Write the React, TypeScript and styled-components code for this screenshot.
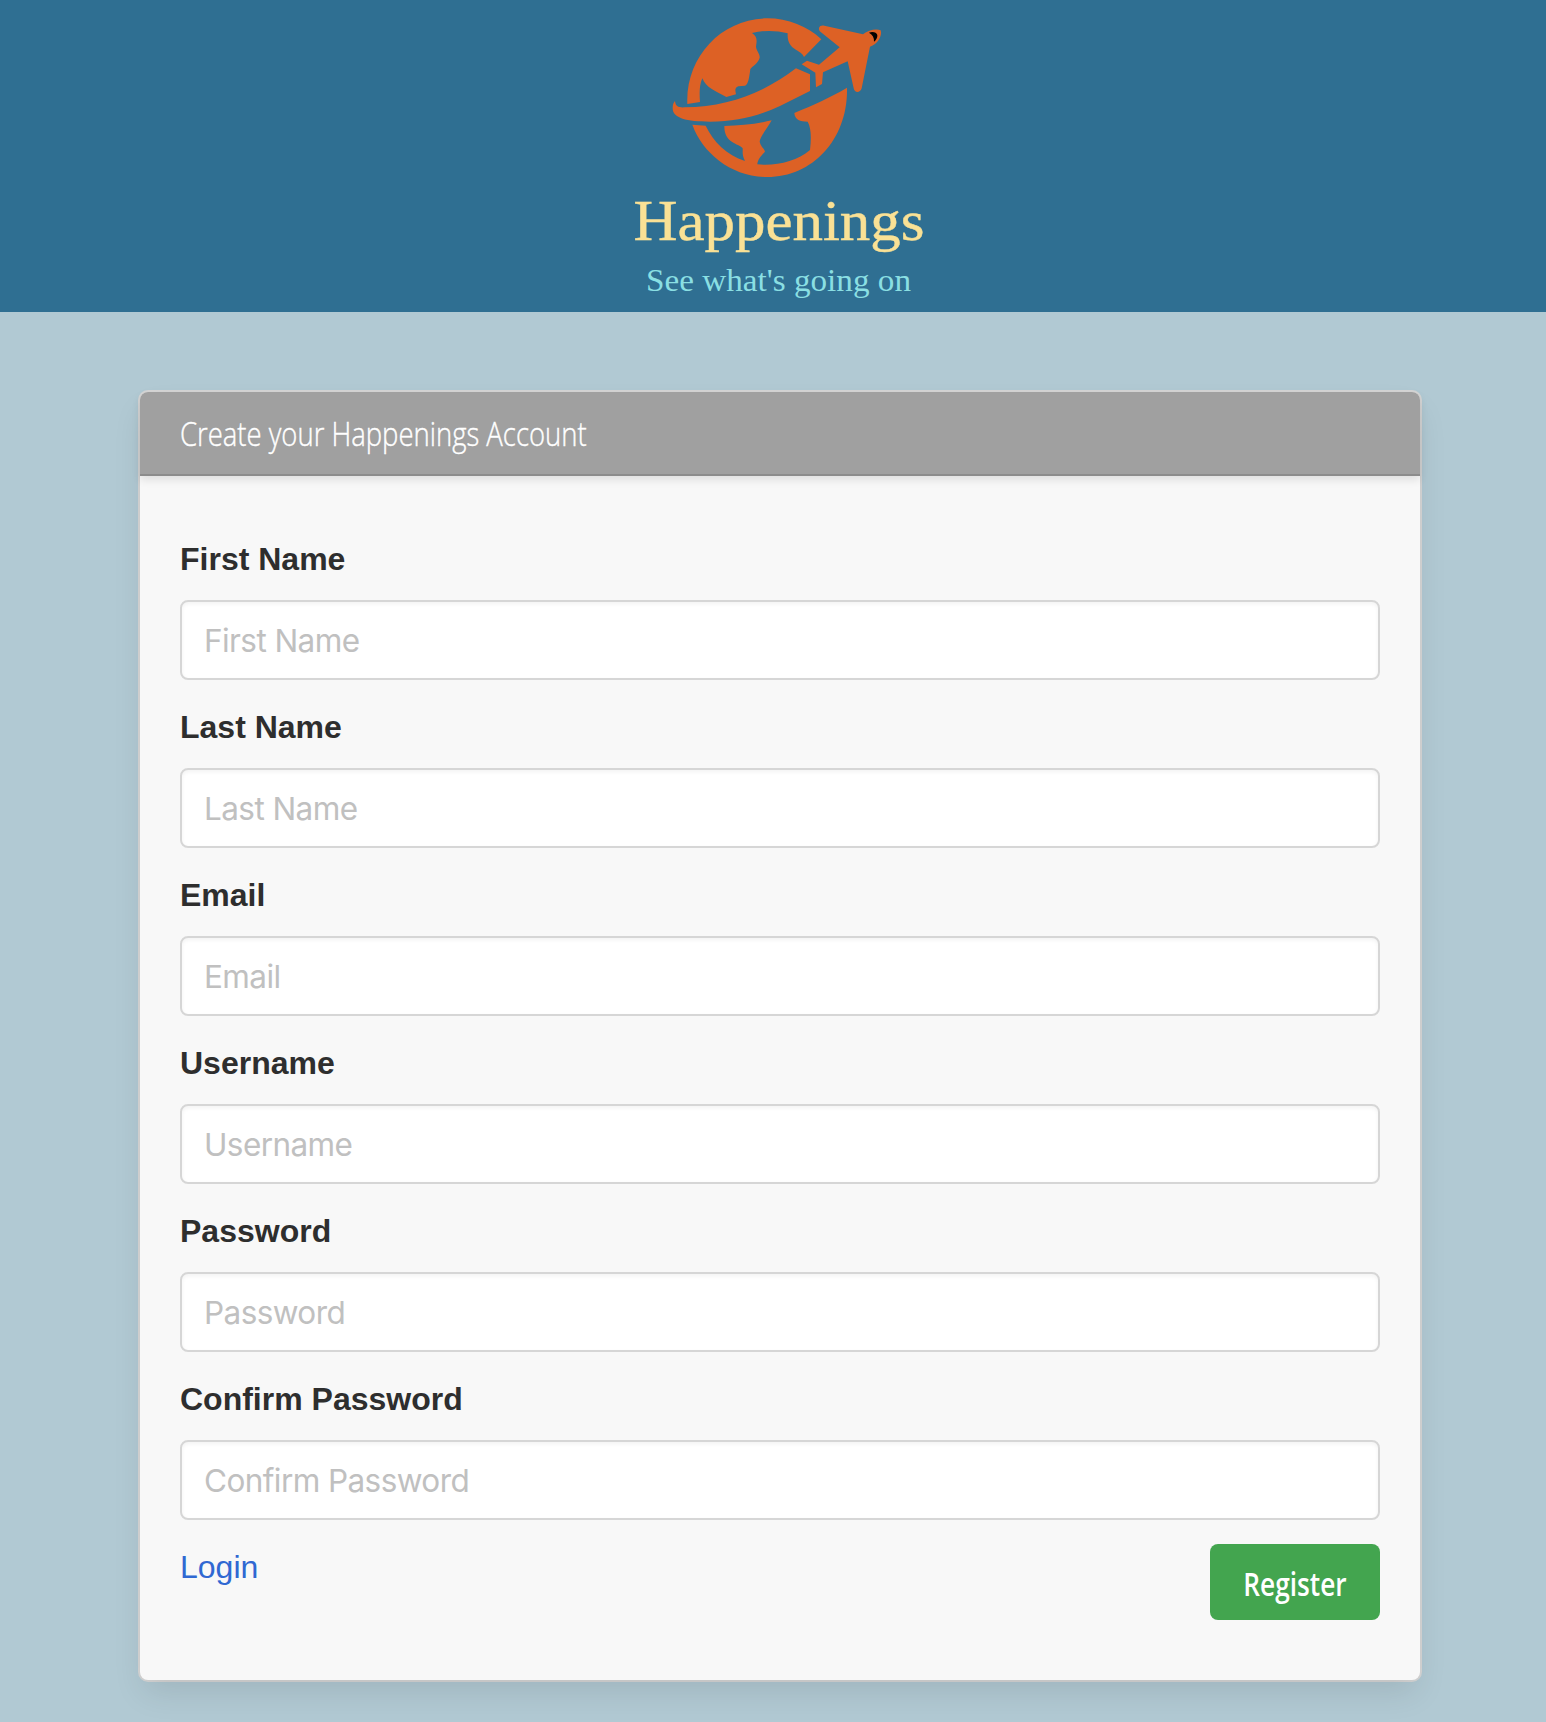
import React from "react";
import styled, { createGlobalStyle } from "styled-components";

const GlobalStyle = createGlobalStyle`
  *, *::before, *::after { box-sizing: border-box; }
  html { background: #b1c9d3; }
  body {
    margin: 0;
    color: #2e2e2e;
    font: 400 32px/1.5 "Liberation Sans", Helvetica, Arial, sans-serif;
  }
`;

const Page = styled.div`
  min-height: 1722px;
  overflow: hidden;
  background: #b1c9d3;
`;

const Banner = styled.header`
  display: flex;
  justify-content: center;
  height: 312px;
  background: #2f6f92;
`;

const LogoArt = styled.svg`
  display: block;
  width: 320px;
  height: 312px;
  font-family: "Liberation Serif", serif;
`;

const Card = styled.main`
  width: 1280px;
  height: 1288px;
  margin: 80px auto 0 140px;
  border-radius: 8px;
  background: #f8f8f8;
  box-shadow: 0 16px 32px -4px rgba(10, 10, 10, 0.1), 0 0 0 2px #d6d6d6;
`;

const CardHeader = styled.div`
  display: flex;
  align-items: center;
  height: 84px;
  padding: 0 40px;
  border-bottom: 2px solid #8c8c8c;
  border-radius: 8px 8px 0 0;
  background: #a0a0a0;
  box-shadow: 0 4px 8px rgba(10, 10, 10, 0.1);
`;

const Condensed = styled.span<{ $scale: number; $origin?: string }>`
  display: inline-block;
  font-family: "Open Sans", sans-serif;
  white-space: nowrap;
  transform: scaleX(${(p) => p.$scale});
  transform-origin: ${(p) => p.$origin ?? "left"} center;
`;

const CardTitle = styled.h1`
  margin: 2px 0 0;
  color: #fff;
  font-size: 33px;
  font-weight: 300;
  line-height: 48px;
  -webkit-text-stroke: 0.4px #fff;
`;

const Form = styled.form`
  padding: 60px 40px 0;
`;

const Field = styled.div`
  display: flex;
  flex-direction: column;
  gap: 16px;
  margin-bottom: 24px;
`;

const Label = styled.label`
  height: 48px;
  color: #2e2e2e;
  font-weight: 700;
  line-height: 46px;
`;

const Input = styled.input`
  width: 100%;
  height: 80px;
  padding: 0 22px;
  border: 2px solid #d6d6d6;
  border-radius: 8px;
  outline: none;
  background: #fff;
  box-shadow: inset 0 2px 4px rgba(10, 10, 10, 0.05);
  color: #2e2e2e;
  font: 400 31.5px/48px Inter, sans-serif;
  letter-spacing: -0.58px;

  &::placeholder {
    color: #c0c0c0;
    opacity: 1;
  }
`;

const Actions = styled.div`
  display: flex;
  align-items: flex-start;
  justify-content: space-between;
`;

const LoginLink = styled.a`
  color: #3068d2;
  line-height: 46px;
  text-decoration: none;
`;

const RegisterButton = styled.button`
  display: flex;
  align-items: center;
  justify-content: center;
  width: 170px;
  height: 76px;
  padding: 3px 0 0;
  border: 0;
  border-radius: 8px;
  background: #43a54f;
  color: #fff;
  font-size: 32px;
  font-weight: 600;
`;

const fields = [
  { id: "firstName", label: "First Name", type: "text" },
  { id: "lastName", label: "Last Name", type: "text" },
  { id: "email", label: "Email", type: "email" },
  { id: "username", label: "Username", type: "text" },
  { id: "password", label: "Password", type: "password" },
  { id: "confirmPassword", label: "Confirm Password", type: "password" },
];

function Logo() {
  return (
    <LogoArt viewBox="613 0 320 312" role="img" aria-label="Happenings">
      <g transform="translate(660 5) scale(.33333)" fill="#dd6125">
        <path d="M82 297C76 157 184 40 322 40C384 40 443 64 484 103L432 156C424 132 380 138 383 85Q330 71 276 84C290 95 292 100 288 125C290 140 300 145 299 158C295 175 275 185 271 192C268 215 265 240 255 242L235 244C223 249 226 257 228 268L199 276C165 258 138 248 127 220C118 240 118 265 120 291Z" />
        <path d="M45 288C47 305 55 308 75 307C200 305 310 265 408 190L450 208V258L360 303C290 335 230 350 150 350C80 350 38 340 38 310C38 300 40 293 45 288Z" />
        <path d="M97 359L137 362C160 410 200 450 255 468C245 448 249 440 248 430C235 415 192 415 193 363C240 362 290 357 335 346C325 365 300 395 299 410C302 425 312 430 315 440C305 450 292 465 292 478C345 484 410 470 450 435C454 400 454 370 443 350C420 350 405 345 403 324C460 300 510 278 561 248C565 400 460 516 322 516C215 516 128 445 97 359Z" />
        <path d="M425 178L441 167L477 179L539 127L483 82C470 70 480 58 493 62L609 88C625 74 650 71 662 76C668 92 652 120 630 125L605 250C600 266 583 264 581 250L563 169L489 202L486 237L468 247L466 203Z" />
        <path fill="#000" d="M627 83C638 79 650 82 652 90C653 98 648 106 642 110C643 98 638 90 627 83Z" />
      </g>
      <text
        x="633.5"
        y="239.5"
        fontSize="56"
        textLength="291"
        lengthAdjust="spacingAndGlyphs"
        fill="#fae195"
        stroke="#fae195"
        strokeWidth="0.4"
      >
        Happenings
      </text>
      <text x="646" y="291" fontSize="31" textLength="265" lengthAdjust="spacingAndGlyphs" fill="#8adfe3">
        See what's going on
      </text>
    </LogoArt>
  );
}

export default function App() {
  return (
    <Page>
      <GlobalStyle />
      <Banner>
        <Logo />
      </Banner>
      <Card>
        <CardHeader>
          <CardTitle>
            <Condensed $scale={0.832}>Create your Happenings Account</Condensed>
          </CardTitle>
        </CardHeader>
        <Form onSubmit={(e) => e.preventDefault()}>
          {fields.map((f) => (
            <Field key={f.id}>
              <Label htmlFor={f.id}>{f.label}</Label>
              <Input id={f.id} name={f.id} type={f.type} placeholder={f.label} />
            </Field>
          ))}
          <Actions>
            <LoginLink href="#login">Login</LoginLink>
            <RegisterButton type="submit">
              <Condensed $scale={0.82} $origin="center">
                Register
              </Condensed>
            </RegisterButton>
          </Actions>
        </Form>
      </Card>
    </Page>
  );
}
